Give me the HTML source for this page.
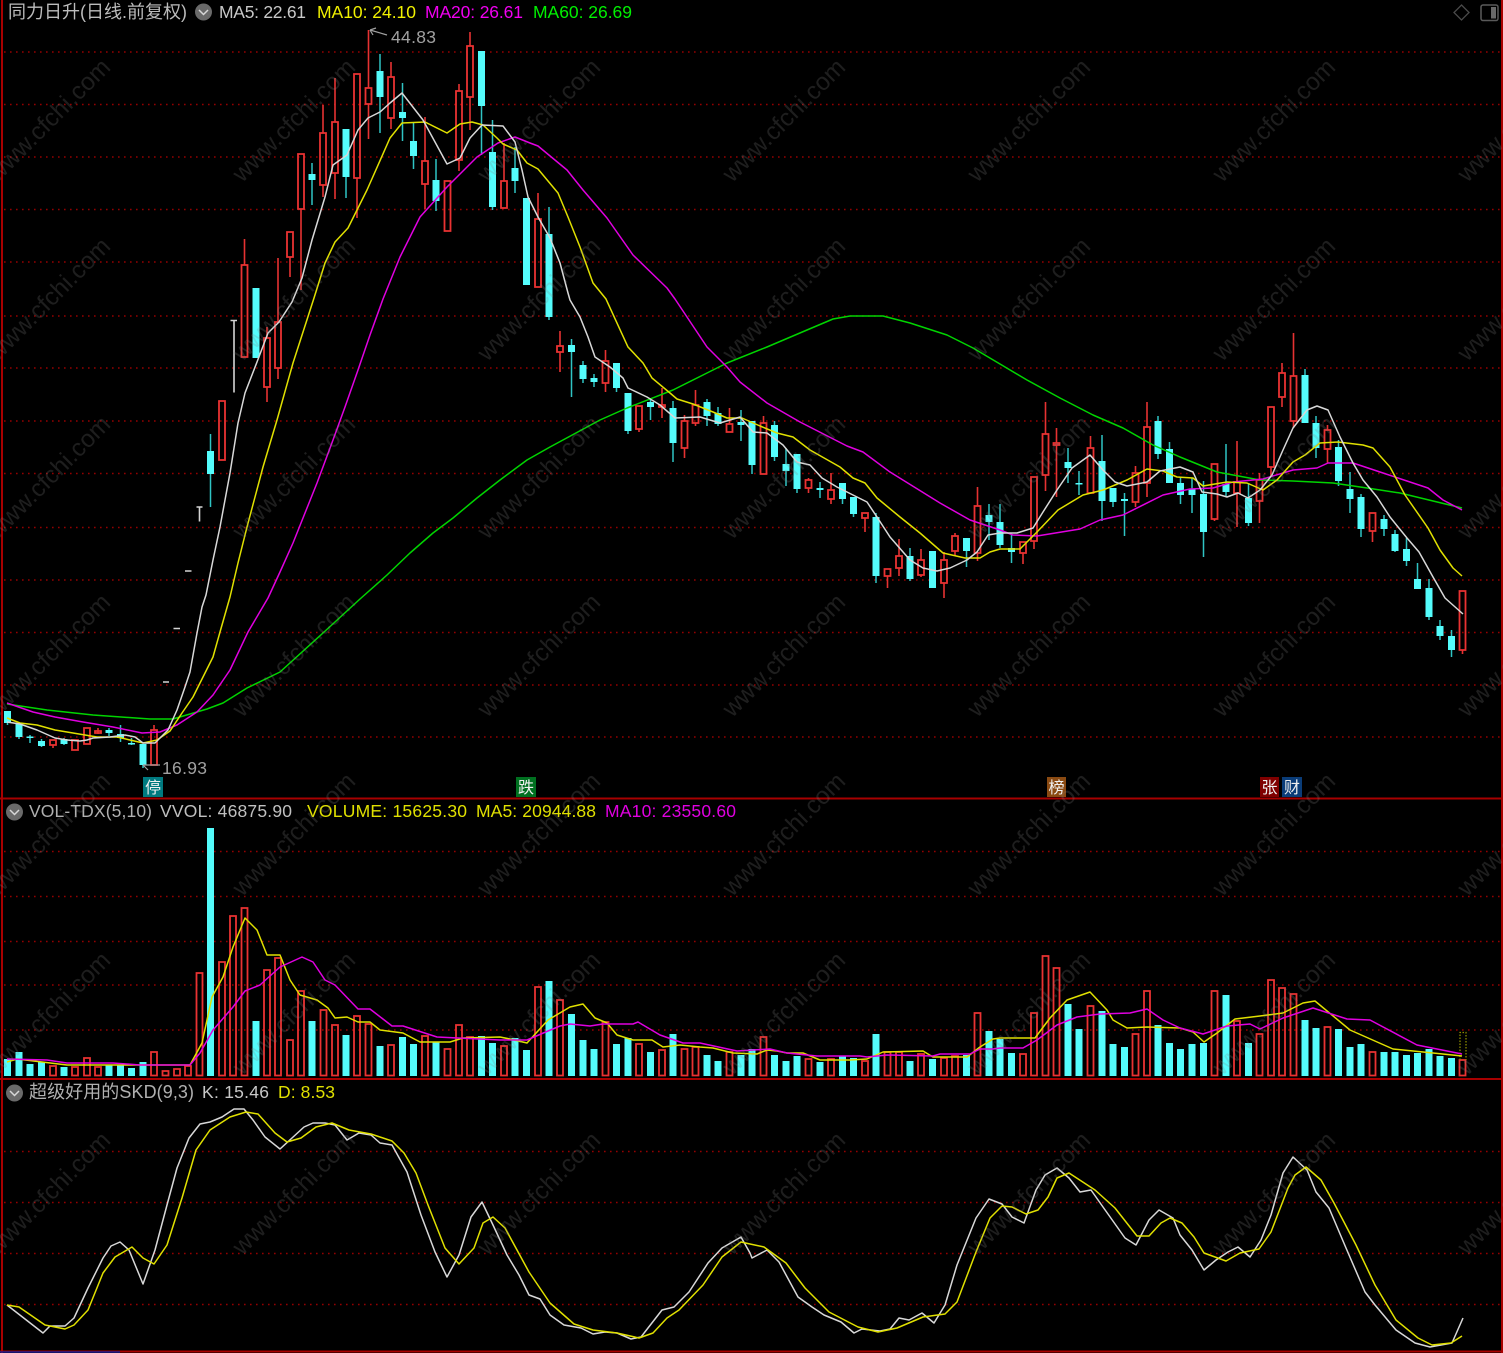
<!DOCTYPE html>
<html><head><meta charset="utf-8"><style>
html,body{margin:0;padding:0;background:#000;width:1503px;height:1353px;overflow:hidden}
svg{display:block}
text{font-family:"Liberation Sans","Noto Sans CJK SC",sans-serif}
polyline{stroke-linejoin:round}
.l{font-size:17.5px}
.w text{font-size:24.5px;fill:rgba(128,128,128,.23)}
.t{font-size:16px;fill:#f0f0f0;text-anchor:middle}
</style></head><body>
<svg width="1503" height="1353" viewBox="0 0 1503 1353" xmlns="http://www.w3.org/2000/svg">
<rect width="1503" height="1353" fill="#000"/>
<!-- grid -->
<path fill="none" stroke="#940000" stroke-width="1.4" stroke-dasharray="1.6 4.4" d="M4 52H1500M4 104.5H1500M4 157H1500M4 209.5H1500M4 262H1500M4 316H1500M4 368H1500M4 421H1500M4 473.5H1500M4 527.5H1500M4 580H1500M4 632.5H1500M4 685H1500M4 737H1500M4 851.5H1500M4 896.5H1500M4 941.5H1500M4 985H1500M4 1030H1500M4 1151.5H1500M4 1202.5H1500M4 1253.5H1500M4 1304.5H1500"/>
<!-- frame -->
<path fill="none" stroke="#a80000" stroke-width="2" d="M2 0V1353M1502 0V1353M0 798.5H1503M0 1079H1503M0 1351.5H1503"/>
<path stroke="#1a1a90" stroke-width="1.5" d="M0 1352H120"/>
<!-- candle wicks -->
<path fill="none" stroke="#e63232" stroke-width="1.6" d="M53 745V748M244.5 239V265M267 327V338M267 387V402M278 258V322M278 368V379M290 257V277M301 209V290M323 105V133M323 185V197M335 78V122M335 173V199M357 178V218M368.5 30V88M368.5 104V139M391 62V77M391 118V129M425 117V161M425 184V209M459 84V91M459 160V171M470 32V46M470 97V130M504 143V181M538 193V219M560 331V346M560 352V372M605.5 350V361M605.5 383V392M639 429V432M662 388V405M662 407V418M684.5 415V421M684.5 448V458M695.5 390V405M695.5 423V426M729.5 408V424M763.5 416V423M808.5 478V480M808.5 488V493M831 473V490M831 499V504M865 518V532M887.5 576V588M899 539V556M899 568V576M921 549V560M921 575V577M944 552V560M944 583V598M955 533V536M955 551V556M977.5 487V506M977.5 553V561M1023 553V564M1034 541V549M1045.5 402V434M1045.5 475V491M1056.5 428V443M1056.5 445V497M1090.5 436V448M1135.5 466V473M1135.5 502V507M1147 402V427M1147 483V497M1214.5 519V521M1237 441V482M1237 493V527M1259.5 473V480M1259.5 501V523M1271 467V477M1282 363V373M1282 397V407M1293.5 333V376M1293.5 421V428M1327.5 425V430M1327.5 449V463M1372.5 531V542M1462.5 650V654M154 725V730M98 728V734"/>
<path fill="none" stroke="#2fc4c4" stroke-width="1.5" d="M7.5 711V725M19 724V739M30 735V743M41.5 739V747M64 738V745M109 728V736M120.5 725V742M131.5 738V745M143 744V768M210.5 434V507M312 163V205M346 129V198M380 54V133M402.5 83V141M413.5 122V169M436 159V211M481.5 51V155M492.5 120V210M515 147V193M549 207V320M571.5 339V397M583 361V383M594 374V387M616.5 363V392M628 393V434M650.5 398V420M673 401V462M707 399V426M718 407V426M741 410V441M752 421V474M774.5 421V461M786 448V486M797 454V493M820 482V498M842.5 483V504M853.5 497V517M876 513V583M910 548V581M966.5 538V567M989 504V540M1000 504V548M1011.5 535V563M1068 448V483M1079 471V495M1102 435V521M1113 488V507M1124.5 493V536M1158 416V459M1169.5 442V483M1180.5 477V504M1192 478V513M1203.5 481V557M1226 444V497M1248.5 483V526M1305 369V423M1316 416V458M1338.5 440V486M1350 472V513M1361 494V537M1384 515V536M1395 530V552M1406.5 538V566M1417.5 563V589M1429 579V620M1440 620V640M1451.5 630V657"/>
<!-- red bodies -->
<path fill="none" stroke="#ea3232" stroke-width="1.8" d="M50 740h6v5h-6zM72 740h6v10h-6zM84 728h6v16h-6zM95 731h6v2h-6zM151 730h6v35h-6zM219 401h6v59h-6zM241.5 265h6v92h-6zM264 338h6v49h-6zM275 322h6v46h-6zM287 232h6v25h-6zM298 154h6v55h-6zM320 133h6v52h-6zM332 122h6v51h-6zM354 74h6v104h-6zM365.5 88h6v16h-6zM388 77h6v41h-6zM422 161h6v23h-6zM444.5 181h6v50h-6zM456 91h6v69h-6zM467 46h6v51h-6zM501 181h6v27h-6zM535 219h6v68h-6zM557 346h6v6h-6zM602.5 361h6v22h-6zM636 406h6v23h-6zM659 405h6v2h-6zM681.5 421h6v27h-6zM692.5 405h6v18h-6zM726.5 424h6v8h-6zM760.5 423h6v51h-6zM805.5 480h6v8h-6zM828 490h6v9h-6zM862 513h6v5h-6zM884.5 569h6v7h-6zM896 556h6v12h-6zM918 560h6v15h-6zM941 560h6v23h-6zM952 536h6v15h-6zM974.5 506h6v47h-6zM1020 542h6v11h-6zM1031 477h6v64h-6zM1042.5 434h6v41h-6zM1053.5 443h6v2h-6zM1087.5 448h6v45h-6zM1132.5 473h6v29h-6zM1144 427h6v56h-6zM1211.5 464h6v55h-6zM1234 482h6v11h-6zM1256.5 480h6v21h-6zM1268 407h6v60h-6zM1279 373h6v24h-6zM1290.5 376h6v45h-6zM1324.5 430h6v19h-6zM1369.5 513h6v18h-6zM1459.5 591h6v59h-6z"/>
<!-- cyan bodies -->
<path fill="#54fcfc" d="M4 711h7v12h-7zM15.5 724h7v13h-7zM26.5 736.5h7v1.5h-7zM38 741h7v5h-7zM60.500 739h7v5h-7zM105.500 730h7v3h-7zM117 734h7v4h-7zM128 743h7v1.500h-7zM139.500 744h7v21h-7zM207 451h7v23h-7zM252.500 288h7v70h-7zM308.500 174h7v6h-7zM342.500 129h7v48h-7zM376.500 71h7v26h-7zM399 112h7v6h-7zM410 141h7v15h-7zM432.500 180h7v21h-7zM478 51h7v55h-7zM489 152h7v55h-7zM511.500 168h7v13h-7zM523 198h7v87h-7zM545.500 234h7v83h-7zM568 345h7v7h-7zM579.500 365h7v14h-7zM590.500 378h7v4h-7zM613 363h7v25h-7zM624.500 393h7v38h-7zM647 402h7v5h-7zM669.500 408h7v35h-7zM703.500 402h7v14h-7zM714.500 413h7v11h-7zM737.500 422h7v3h-7zM748.500 421h7v44h-7zM771 425h7v32h-7zM782.500 464h7v7h-7zM793.500 454h7v35h-7zM816.500 488h7v2h-7zM839 483h7v16h-7zM850 497h7v17h-7zM872.500 517h7v59h-7zM906.500 556h7v23h-7zM929 551h7v37h-7zM963 538h7v13h-7zM985.500 515h7v7h-7zM996.500 522h7v23h-7zM1008 548h7v4h-7zM1064.500 462h7v6h-7zM1075.500 483h7v1.500h-7zM1098.500 461h7v40h-7zM1109.500 488h7v14h-7zM1121 499h7v2h-7zM1154.500 421h7v33h-7zM1166 449h7v34h-7zM1177 483h7v12h-7zM1188.500 489h7v6h-7zM1200 494h7v38h-7zM1222.500 484h7v8h-7zM1245 498h7v25h-7zM1301.500 375h7v48h-7zM1312.500 423h7v25h-7zM1335 447h7v34h-7zM1346.500 489h7v10h-7zM1357.500 497h7v32h-7zM1380.500 519h7v10h-7zM1391.500 534h7v17h-7zM1403 549h7v12h-7zM1414 579h7v10h-7zM1425.500 588h7v29h-7zM1436.500 626h7v10h-7zM1448 636h7v14h-7z"/>
<!-- limit-up white marks -->
<path fill="none" stroke="#d4d4d4" stroke-width="1.6" d="M163 682H169M173.500 628.500H180M185 571H191.500M196.500 507H202.500M199.500 507V521.500M230.500 320.500H237M234 320.500V392.500"/>
<!-- MA lines -->
<polyline fill="none" stroke="#00d400" stroke-width="1.5" points="7,704 47,710 93,715 150,719 173,719 207,709 223,703 247,688 280,672 323,633 360,599 387,575 410,553 433,533 453,518 477,498 500,480 527,460 550,447 600,420 627,408 673,390 707,373 727,363 767,347 807,330 833,319 850,316 883,316 910,323 947,335 973,348 1000,364 1027,380 1060,398 1093,415 1123,428 1153,445 1180,457 1217,472 1260,480 1293,481 1333,483 1367,488 1400,493 1462,508"/>
<polyline fill="none" stroke="#e000e0" stroke-width="1.5" points="7,703 33,712 55,717 83,722 113,727 142,733 160,732 177,725 197,712 213,695 230,670 248,632 268,598 280,572 293,543 317,483 333,440 345,407 358,370 370,335 383,299 400,257 420,217 447,187 477,157 498,143 515,137 530,143 538,146 567,170 583,190 607,218 633,255 667,288 675,299 707,347 727,367 740,382 767,403 800,422 847,446 863,452 890,472 940,503 970,520 1000,530 1013,535 1037,536 1080,529 1100,520 1123,515 1163,495 1190,489 1213,488 1233,482 1263,479 1293,470 1317,468 1328,463 1353,463 1383,473 1428,488 1443,500 1462,510"/>
<polyline fill="none" stroke="#e0e000" stroke-width="1.5" points="7,718 20,723 37,725 55,730 73,733 97,737 117,737 130,740 143,743 157,740 170,731 182,713 193,697 213,657 220,632 230,597 238,563 247,527 263,467 277,420 293,363 314,298 325,263 335,242 348,228 367,190 390,138 402,123 425,122 447,133 460,124 472,122 483,125 497,138 503,144 517,150 527,163 538,169 558,193 568,217 580,247 593,283 606,299 628,347 643,363 652,378 670,393 677,399 693,404 713,412 727,418 742,418 760,426 777,433 793,437 810,450 840,467 853,478 865,483 877,498 900,517 920,533 943,553 965,558 980,558 990,552 1000,549 1020,549 1037,532 1058,510 1083,495 1103,490 1127,480 1147,469 1163,471 1177,477 1193,478 1203,486 1227,482 1247,483 1263,490 1277,480 1293,462 1305,455 1320,443 1338,442 1363,445 1373,448 1390,467 1405,495 1428,528 1440,550 1453,568 1462,576"/>
<polyline fill="none" stroke="#d8d8d8" stroke-width="1.5" points="7,722 20,724 37,730 55,738 67,740 80,741 87,740 93,738 110,737 125,735 135,737 143,743 155,743 168,730 177,710 185,687 190,672 197,633 202,607 206,595 213,560 220,527 230,473 238,423 245,393 257,362 268,333 279,322 292,302 302,278 312,240 325,197 333,165 347,155 358,130 368,118 380,112 390,103 402,93 423,120 447,164 460,158 470,138 482,125 503,126 515,142 522,170 528,197 538,217 550,238 560,263 568,293 570,300 580,317 588,337 595,357 610,367 623,378 628,388 647,397 660,405 675,418 700,417 720,423 740,417 753,432 767,433 783,445 797,462 810,465 822,478 837,487 853,495 867,502 877,517 890,537 910,560 923,568 937,571 950,568 967,560 977,552 988,535 1000,533 1017,533 1033,528 1043,512 1057,490 1072,468 1090,455 1103,470 1115,482 1127,486 1147,482 1160,471 1180,467 1193,472 1202,492 1217,494 1227,497 1238,493 1248,498 1260,490 1272,475 1283,450 1293,428 1307,410 1317,406 1328,410 1340,437 1353,463 1363,480 1377,497 1390,517 1407,538 1419,552 1433,577 1445,598 1463,614"/>
<!-- annotations -->
<path fill="none" stroke="#a0a0a0" stroke-width="1.2" d="M387 35L370 30M370 30L376 28M370 30L373 35M160 765H143M143 765L148 770"/>
<text x="391" y="43" class="l" fill="#a0a0a0" textLength="45">44.83</text>
<text x="162" y="774" class="l" fill="#a0a0a0" textLength="45">16.93</text>
<!-- tags -->
<rect x="143" y="777" width="20" height="20" fill="#007a80"/><text x="153" y="793" class="t">停</text>
<rect x="516" y="777" width="20" height="20" fill="#007020"/><text x="526" y="793" class="t">跌</text>
<rect x="1047" y="777" width="19" height="20" fill="#8a4a12"/><text x="1056.500" y="793" class="t">榜</text>
<rect x="1260" y="777" width="19" height="20" fill="#800000"/><text x="1269.500" y="793" class="t">张</text>
<rect x="1282" y="777" width="20" height="20" fill="#0a3c78"/><text x="1292" y="793" class="t">财</text>
<!-- volume bars -->
<path fill="none" stroke="#ea3232" stroke-width="1.8" d="M50 1066h6v9.500h-6zM72 1067h6v8.500h-6zM84 1058h6v17.500h-6zM95 1067h6v8.500h-6zM151 1052h6v23.500h-6zM162.500 1071h6v4.500h-6zM174 1069h6v6.500h-6zM185 1066h6v9.500h-6zM196.500 973h6v102.500h-6zM219 962h6v113.500h-6zM230 916h6v159.500h-6zM241.500 908h6v167.500h-6zM264 970h6v105.500h-6zM275 958h6v117.500h-6zM287 1040h6v35.500h-6zM298 991h6v84.500h-6zM320.500 1010h6v65.500h-6zM332 1025h6v50.500h-6zM354 1016h6v59.500h-6zM365.500 1024h6v51.500h-6zM388 1045h6v30.500h-6zM422 1036h6v39.500h-6zM444.500 1049h6v26.500h-6zM456 1025h6v50.500h-6zM467 1037h6v38.500h-6zM501 1046h6v29.500h-6zM535 987h6v88.500h-6zM557 1000h6v75.500h-6zM602.500 1022h6v53.500h-6zM636 1044h6v31.500h-6zM659 1050h6v25.500h-6zM681.500 1049h6v26.500h-6zM692.500 1047h6v28.500h-6zM726.500 1052h6v23.500h-6zM760.500 1037h6v38.500h-6zM805.500 1059h6v16.500h-6zM828 1059h6v16.500h-6zM862 1061h6v14.500h-6zM884.500 1052h6v23.500h-6zM896 1052h6v23.500h-6zM918 1054h6v21.500h-6zM941 1058h6v17.500h-6zM952 1056h6v19.500h-6zM974.500 1013h6v62.500h-6zM1020 1054h6v21.500h-6zM1031 1013h6v62.500h-6zM1042.500 956h6v119.500h-6zM1053.500 968h6v107.500h-6zM1087.500 1006h6v69.500h-6zM1132.500 1034h6v41.500h-6zM1144 991h6v84.500h-6zM1211.500 991h6v84.500h-6zM1234 1021h6v54.500h-6zM1256.500 1034h6v41.500h-6zM1268 980h6v95.500h-6zM1279 988h6v87.500h-6zM1290.500 994h6v81.500h-6zM1324.500 1027h6v48.500h-6zM1369.500 1052h6v23.500h-6zM1459.500 1060h6v15.500h-6z"/>
<path fill="#54fcfc" d="M4 1059h7v17h-7zM15.500 1052h7v24h-7zM26.500 1064h7v12h-7zM38 1062h7v14h-7zM60.500 1067h7v9h-7zM105.500 1065h7v11h-7zM117 1065h7v11h-7zM128 1068h7v8h-7zM139.500 1062h7v14h-7zM207 828h7v248h-7zM252.500 1021h7v55h-7zM308.500 1021h7v55h-7zM342.500 1035h7v41h-7zM376.500 1046h7v30h-7zM399 1037h7v39h-7zM410 1044h7v32h-7zM432.500 1042h7v34h-7zM478 1036h7v40h-7zM489 1043h7v33h-7zM511.500 1038h7v38h-7zM523 1050h7v26h-7zM545.500 981h7v95h-7zM568 1014h7v62h-7zM579.500 1040h7v36h-7zM590.500 1049h7v27h-7zM613 1044h7v32h-7zM624.500 1038h7v38h-7zM647 1052h7v24h-7zM669.500 1034h7v42h-7zM703.500 1055h7v21h-7zM714.500 1061h7v15h-7zM737.500 1055h7v21h-7zM748.500 1049h7v27h-7zM771 1055h7v21h-7zM782.500 1061h7v15h-7zM793.500 1056h7v20h-7zM816.500 1062h7v14h-7zM839 1056h7v20h-7zM850 1058h7v18h-7zM872.500 1034h7v42h-7zM906.500 1061h7v15h-7zM929 1059h7v17h-7zM963 1055h7v21h-7zM985.500 1031h7v45h-7zM996.500 1039h7v37h-7zM1008 1053h7v23h-7zM1064.500 1004h7v72h-7zM1075.500 1029h7v47h-7zM1098.500 1011h7v65h-7zM1109.500 1044h7v32h-7zM1121 1047h7v29h-7zM1154.500 1025h7v51h-7zM1166 1043h7v33h-7zM1177 1049h7v27h-7zM1188.500 1044h7v32h-7zM1200 1043h7v33h-7zM1222.500 995h7v81h-7zM1245 1043h7v33h-7zM1301.500 1020h7v56h-7zM1312.500 1028h7v48h-7zM1335 1029h7v47h-7zM1346.500 1047h7v29h-7zM1357.500 1044h7v32h-7zM1380.500 1052h7v24h-7zM1391.500 1052h7v24h-7zM1403 1055h7v21h-7zM1414 1053h7v23h-7zM1425.500 1049h7v27h-7zM1436.500 1056h7v20h-7zM1448 1058h7v18h-7z"/>
<path fill="none" stroke="#8a8a00" stroke-width="1.3" stroke-dasharray="1.500 1.500" d="M1460 1060V1032.500H1466V1060"/>
<!-- volume lines -->
<polyline fill="none" stroke="#e0e000" stroke-width="1.5" points="7,1062 17,1059 67,1065 190,1065 202,1043 212,997 223,977 233,947 245,918 257,930 267,955 280,955 290,980 300,995 317,1000 328,1008 335,1018 347,1017 358,1022 370,1022 380,1030 403,1033 420,1042 450,1042 463,1038 500,1037 510,1039 527,1043 548,1020 570,1007 583,1004 595,1018 607,1023 617,1035 633,1040 652,1040 663,1047 680,1045 700,1047 713,1048 733,1053 757,1054 767,1050 777,1051 787,1053 803,1053 820,1060 850,1060 867,1059 883,1052 923,1051 933,1057 967,1057 980,1047 993,1039 1000,1038 1035,1038 1050,1018 1067,1000 1090,992 1107,1010 1113,1020 1127,1028 1147,1027 1180,1028 1193,1032 1204,1042 1217,1033 1235,1019 1260,1016 1283,1013 1303,1003 1315,1001 1350,1030 1393,1049 1433,1053 1462,1056"/>
<polyline fill="none" stroke="#e000e0" stroke-width="1.5" points="7,1059 47,1060 67,1063 113,1063 140,1065 190,1065 200,1053 213,1030 233,1007 245,991 260,985 280,967 302,957 313,962 325,980 335,985 358,1009 370,1009 392,1026 403,1026 437,1037 500,1040 527,1040 548,1031 560,1026 570,1024 590,1026 603,1024 633,1024 638,1022 660,1035 683,1043 700,1043 737,1051 770,1049 787,1053 817,1056 860,1056 867,1057 887,1055 933,1056 940,1054 970,1054 980,1049 993,1049 1000,1048 1023,1048 1037,1040 1057,1025 1077,1017 1100,1014 1130,1013 1147,1009 1163,1020 1180,1028 1203,1034 1227,1026 1250,1024 1260,1029 1283,1018 1313,1008 1347,1019 1370,1020 1417,1045 1462,1054"/>
<!-- SKD -->
<polyline fill="none" stroke="#d8d8d8" stroke-width="1.5" points="7,1305 43,1333 50,1326 65,1326 74,1318 88,1288 103,1258 111,1246 120,1242 129,1250 143,1284 155,1250 167,1205 177,1168 189,1138 200,1124 210,1122 222,1117 234,1109 244,1109 253,1120 265,1137 280,1149 292,1138 304,1127 313,1123 325,1123 335,1125 347,1140 359,1133 371,1135 380,1143 392,1145 407,1172 421,1215 435,1252 447,1277 459,1255 471,1217 482,1202 493,1225 507,1255 519,1275 529,1295 540,1299 550,1315 564,1325 581,1328 593,1334 605,1332 617,1333 631,1339 641,1337 662,1310 674,1307 689,1292 708,1263 722,1248 741,1237 750,1253 752,1258 767,1250 779,1262 798,1297 812,1307 824,1315 841,1322 854,1333 862,1329 880,1331 890,1329 899,1318 909,1320 922,1313 934,1323 945,1305 957,1265 976,1218 989,1199 1002,1204 1012,1217 1024,1223 1036,1190 1045,1175 1057,1168 1069,1178 1080,1192 1091,1190 1103,1207 1125,1238 1136,1245 1149,1220 1159,1210 1173,1218 1180,1235 1192,1250 1204,1270 1216,1260 1228,1252 1238,1247 1250,1257 1261,1240 1271,1215 1283,1173 1293,1157 1307,1170 1316,1192 1329,1208 1346,1248 1365,1292 1375,1305 1396,1330 1415,1343 1430,1347 1452,1343 1463,1318"/>
<polyline fill="none" stroke="#e0e000" stroke-width="1.5" points="7,1305 19,1307 45,1325 65,1329 74,1325 88,1310 103,1273 115,1257 132,1247 143,1258 154,1264 167,1245 182,1198 196,1150 210,1130 230,1117 246,1112 258,1114 275,1133 287,1142 301,1138 316,1127 332,1123 349,1130 371,1134 392,1141 404,1153 416,1173 428,1205 445,1248 459,1264 474,1248 483,1223 493,1217 505,1228 529,1272 550,1303 574,1324 593,1330 617,1333 639,1338 653,1333 667,1318 679,1310 703,1285 722,1257 741,1242 750,1244 764,1247 786,1263 805,1288 829,1312 858,1327 878,1332 897,1328 923,1317 945,1314 957,1302 976,1252 990,1218 1002,1206 1012,1207 1026,1214 1038,1210 1048,1197 1057,1178 1069,1173 1095,1190 1115,1208 1137,1236 1149,1236 1161,1223 1170,1218 1182,1223 1194,1237 1204,1253 1226,1261 1240,1253 1259,1249 1271,1232 1288,1188 1295,1175 1306,1167 1321,1180 1334,1203 1356,1245 1375,1285 1396,1320 1418,1338 1432,1345 1451,1343 1462,1336"/>
<!-- headers -->
<g>
<circle cx="203.500" cy="12" r="8.500" fill="#6a6a6a"/><path d="M199 10l4.500 4.500 4.500-4.500" fill="none" stroke="#d8d8d8" stroke-width="1.500"/>
<circle cx="14.500" cy="812" r="8.500" fill="#6a6a6a"/><path d="M10 810l4.500 4.500 4.500-4.500" fill="none" stroke="#d8d8d8" stroke-width="1.500"/>
<circle cx="14.500" cy="1093" r="8.500" fill="#6a6a6a"/><path d="M10 1091l4.500 4.500 4.500-4.500" fill="none" stroke="#d8d8d8" stroke-width="1.500"/>
<path d="M1461.500 5l7.500 7.500-7.500 7.500-7.500-7.500z" fill="none" stroke="#4a4a4a" stroke-width="1.300"/>
<rect x="1481" y="5" width="17" height="15.500" rx="2" fill="none" stroke="#5a5a5a" stroke-width="1.500"/><rect x="1491" y="7" width="5" height="11.500" fill="#6a6a6a"/>
</g>
<text x="8" y="18" font-size="18" fill="#bcbcbc" textLength="179">同力日升(日线.前复权)</text>
<text x="219" y="18" class="l" fill="#c8c8c8" textLength="87">MA5: 22.61</text>
<text x="317" y="18" class="l" fill="#f0f000" textLength="99">MA10: 24.10</text>
<text x="425" y="18" class="l" fill="#f000f0" textLength="98">MA20: 26.61</text>
<text x="533" y="18" class="l" fill="#00f000" textLength="99">MA60: 26.69</text>
<text x="29" y="817" class="l" fill="#b0b0b0" textLength="123">VOL-TDX(5,10)</text>
<text x="160" y="817" class="l" fill="#c0c0c0" textLength="132">VVOL: 46875.90</text>
<text x="307" y="817" class="l" fill="#e0e000" textLength="160">VOLUME: 15625.30</text>
<text x="476" y="817" class="l" fill="#e0e000" textLength="120">MA5: 20944.88</text>
<text x="605" y="817" class="l" fill="#e000e0" textLength="131">MA10: 23550.60</text>
<text x="29" y="1098" font-size="18" fill="#b0b0b0" textLength="165">超级好用的SKD(9,3)</text>
<text x="202" y="1098" class="l" fill="#c8c8c8" textLength="67">K: 15.46</text>
<text x="278" y="1098" class="l" fill="#e0e000" textLength="57">D: 8.53</text>
<!-- watermark -->
<g class="w" text-anchor="middle" transform="translate(3 3)">
<text transform="translate(51.500 123) rotate(-45)">www.cfchi.com</text><text transform="translate(296.500 123) rotate(-45)">www.cfchi.com</text><text transform="translate(541.500 123) rotate(-45)">www.cfchi.com</text><text transform="translate(786.500 123) rotate(-45)">www.cfchi.com</text><text transform="translate(1031.500 123) rotate(-45)">www.cfchi.com</text><text transform="translate(1276.500 123) rotate(-45)">www.cfchi.com</text><text transform="translate(1521.500 123) rotate(-45)">www.cfchi.com</text>
<text transform="translate(51.500 302) rotate(-45)">www.cfchi.com</text><text transform="translate(296.500 302) rotate(-45)">www.cfchi.com</text><text transform="translate(541.500 302) rotate(-45)">www.cfchi.com</text><text transform="translate(786.500 302) rotate(-45)">www.cfchi.com</text><text transform="translate(1031.500 302) rotate(-45)">www.cfchi.com</text><text transform="translate(1276.500 302) rotate(-45)">www.cfchi.com</text><text transform="translate(1521.500 302) rotate(-45)">www.cfchi.com</text>
<text transform="translate(51.500 480) rotate(-45)">www.cfchi.com</text><text transform="translate(296.500 480) rotate(-45)">www.cfchi.com</text><text transform="translate(541.500 480) rotate(-45)">www.cfchi.com</text><text transform="translate(786.500 480) rotate(-45)">www.cfchi.com</text><text transform="translate(1031.500 480) rotate(-45)">www.cfchi.com</text><text transform="translate(1276.500 480) rotate(-45)">www.cfchi.com</text><text transform="translate(1521.500 480) rotate(-45)">www.cfchi.com</text>
<text transform="translate(51.500 658) rotate(-45)">www.cfchi.com</text><text transform="translate(296.500 658) rotate(-45)">www.cfchi.com</text><text transform="translate(541.500 658) rotate(-45)">www.cfchi.com</text><text transform="translate(786.500 658) rotate(-45)">www.cfchi.com</text><text transform="translate(1031.500 658) rotate(-45)">www.cfchi.com</text><text transform="translate(1276.500 658) rotate(-45)">www.cfchi.com</text><text transform="translate(1521.500 658) rotate(-45)">www.cfchi.com</text>
<text transform="translate(51.500 837) rotate(-45)">www.cfchi.com</text><text transform="translate(296.500 837) rotate(-45)">www.cfchi.com</text><text transform="translate(541.500 837) rotate(-45)">www.cfchi.com</text><text transform="translate(786.500 837) rotate(-45)">www.cfchi.com</text><text transform="translate(1031.500 837) rotate(-45)">www.cfchi.com</text><text transform="translate(1276.500 837) rotate(-45)">www.cfchi.com</text><text transform="translate(1521.500 837) rotate(-45)">www.cfchi.com</text>
<text transform="translate(51.500 1016) rotate(-45)">www.cfchi.com</text><text transform="translate(296.500 1016) rotate(-45)">www.cfchi.com</text><text transform="translate(541.500 1016) rotate(-45)">www.cfchi.com</text><text transform="translate(786.500 1016) rotate(-45)">www.cfchi.com</text><text transform="translate(1031.500 1016) rotate(-45)">www.cfchi.com</text><text transform="translate(1276.500 1016) rotate(-45)">www.cfchi.com</text><text transform="translate(1521.500 1016) rotate(-45)">www.cfchi.com</text>
<text transform="translate(51.500 1196) rotate(-45)">www.cfchi.com</text><text transform="translate(296.500 1196) rotate(-45)">www.cfchi.com</text><text transform="translate(541.500 1196) rotate(-45)">www.cfchi.com</text><text transform="translate(786.500 1196) rotate(-45)">www.cfchi.com</text><text transform="translate(1031.500 1196) rotate(-45)">www.cfchi.com</text><text transform="translate(1276.500 1196) rotate(-45)">www.cfchi.com</text><text transform="translate(1521.500 1196) rotate(-45)">www.cfchi.com</text>
</g>
</svg>
</body></html>
